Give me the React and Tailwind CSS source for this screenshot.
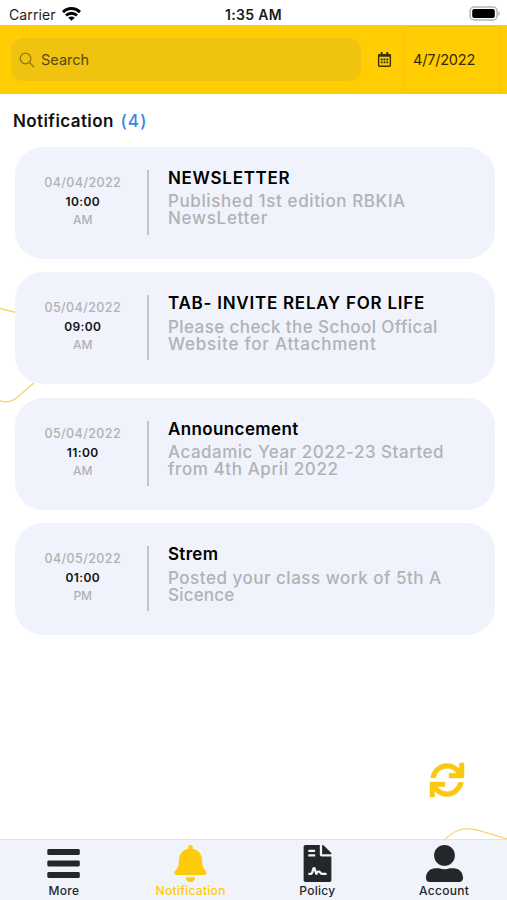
import React from 'react';
import { FaBell, FaFileContract, FaRegCalendarAlt, FaSync, FaUserAlt } from 'react-icons/fa';

const notifications = [
    {
        id: 1,
        date: '04/04/2022',
        time: '10:00',
        period: 'AM',
        title: 'NEWSLETTER',
        titleClass: 'tracking-[0.7px]',
        lines: [
            { text: 'Published 1st edition RBKIA', className: 'tracking-[0.6px]' },
            { text: 'NewsLetter', className: 'tracking-[0.7px]' },
        ],
    },
    {
        id: 2,
        date: '05/04/2022',
        time: '09:00',
        period: 'AM',
        title: 'TAB- INVITE RELAY FOR LIFE',
        titleClass: 'tracking-[0.75px]',
        lines: [
            { text: 'Please check the School Offical', className: 'tracking-[0.41px]' },
            { text: 'Website for Attachment', className: 'tracking-[0.78px]' },
        ],
    },
    {
        id: 3,
        date: '05/04/2022',
        time: '11:00',
        period: 'AM',
        title: 'Announcement',
        titleClass: 'tracking-[0.38px]',
        lines: [
            { text: 'Acadamic Year 2022-23 Started', className: 'tracking-[0.5px]' },
            { text: 'from 4th April 2022', className: 'tracking-[0.6px]' },
        ],
    },
    {
        id: 4,
        date: '04/05/2022',
        time: '01:00',
        period: 'PM',
        title: 'Strem',
        titleClass: 'tracking-[0.3px]',
        lines: [
            { text: 'Posted your class work of 5th A', className: 'tracking-[0.51px]' },
            { text: 'Sicence', className: 'tracking-[0.2px]' },
        ],
    },
];

const MenuIcon = () => (
    <svg className="w-[37px] h-[37px]" viewBox="0 0 37 37" fill="currentColor">
        <rect x="2.3" y="4" width="32.5" height="6" rx="1.4" />
        <rect x="2.3" y="15.5" width="32.5" height="6" rx="1.4" />
        <rect x="2.3" y="27" width="32.5" height="6" rx="1.4" />
    </svg>
);

const tabs = [
    { id: 'more', label: 'More', icon: <MenuIcon /> },
    { id: 'notification', label: 'Notification', icon: <FaBell className="w-[37px] h-[37px]" /> },
    { id: 'policy', label: 'Policy', icon: <FaFileContract className="w-[37px] h-[37px]" /> },
    { id: 'account', label: 'Account', icon: <FaUserAlt className="w-[37px] h-[37px]" /> },
];

const StatusBar = () => (
    <div className="h-[25px] px-[9px] grid grid-cols-3 items-center text-[14px] leading-[25px] text-[#1c1c1c]">
        <div className="flex items-center gap-[6px]">
            <span className="pt-[2px] tracking-[0.1px]">Carrier</span>
            <svg className="w-[19px] h-[14px]" viewBox="0 0 19 14" fill="none" stroke="#000" strokeWidth="2.9">
                <path d="M1 5.1C5.8.3 13.2.3 18 5.1" />
                <path d="M4 8.5c3.2-3 7.8-3 11 0" />
                <path d="M9.5 13.8 6.2 10.7c1.8-1.6 4.8-1.6 6.6 0z" fill="#000" stroke="none" />
            </svg>
        </div>
        <span className="pt-[2px] text-center font-semibold tracking-[0.3px]">1:35 AM</span>
        <div className="flex justify-end -mr-[3px]">
            <svg className="w-[32px] h-[15px]" viewBox="0 0 32 15">
                <rect x="1.1" y="1" width="27" height="13" rx="4" fill="#fff" stroke="#b5b5b5" strokeWidth="1.5" />
                <rect x="3.2" y="3" width="22.6" height="9" rx="2" fill="#000" />
                <path d="M29.5 5.2c1.8.8 1.8 3.8 0 4.6z" fill="#a5a5a5" />
            </svg>
        </div>
    </div>
);

const Header = () => (
    <div className="h-[69px] bg-[#ffcd02] flex items-center pl-[11px] pr-[6px]">
        <div className="w-[350px] h-[43px] rounded-[12px] bg-[#efc310] flex items-center pl-[8px] gap-[6px]">
            <svg className="w-[16px] h-[16px]" viewBox="0 0 16 16" fill="none" stroke="#94790c" strokeWidth="1.3">
                <circle cx="6.5" cy="6.5" r="5.3" />
                <path d="m10.5 10.5 4.2 4.2" strokeLinecap="round" />
            </svg>
            <span className="text-[14.5px] text-[#574810]">Search</span>
        </div>
        <FaRegCalendarAlt className="w-[15px] h-[15px] ml-[15.5px] text-[#3b3106]" />
        <div className="ml-auto w-[97px] h-[67px] rounded-[3px] border border-[#f3c408] flex items-center pl-[8px]">
            <span className="text-[14.5px] text-[#332b06] tracking-[-0.2px]">4/7/2022</span>
        </div>
    </div>
);

const NotificationCard = ({ item }) => (
    <div className="h-[112px] rounded-[28px] bg-[#f0f3fb] flex pt-[23px]">
        <div className="w-[132.5px] pl-[4px] flex flex-col items-center text-[#b0b1b5]">
            <span className="mt-[5px] text-[12.5px] leading-[16px] font-medium tracking-[0.4px]">{item.date}</span>
            <span className="mt-[3px] text-[12px] leading-[16px] font-semibold tracking-[0.4px] text-[#111]">{item.time}</span>
            <span className="mt-[2px] text-[12px] leading-[16px] font-medium">{item.period}</span>
        </div>
        <div className="w-[2px] h-[65px] bg-[#c3c5ca]" />
        <div className="pl-[19px] whitespace-nowrap">
            <h3 className={`-mt-[1px] text-[17px] leading-[18px] font-semibold text-black ${item.titleClass}`}>
                {item.title}
            </h3>
            <div className="mt-[6.5px] text-[17px] leading-[17px] font-medium text-[#b0b2b6]">
                {item.lines.map((line) => (
                    <p key={line.text} className={line.className}>{line.text}</p>
                ))}
            </div>
        </div>
    </div>
);

const TabBar = ({ current }) => (
    <nav className="h-[61px] border-t border-[#dfe1e6] bg-[#f0f3fa] grid grid-cols-4">
        {tabs.map((tab) => (
            <div
                key={tab.id}
                className={`flex flex-col items-center pl-[1px] pt-[5px] ${current === tab.id ? 'text-[#fdca0c]' : 'text-[#24272a]'}`}
            >
                {tab.icon}
                <span className="mt-[1px] text-[12px] leading-[16px] font-medium tracking-[0.3px]">{tab.label}</span>
            </div>
        ))}
    </nav>
);

const App = () => {
    return (
        <div className="relative w-[507px] h-[900px] overflow-hidden bg-white flex flex-col font-['Inter',sans-serif]">
            {/* Background curves */}
            <svg className="absolute inset-0 w-[507px] h-[900px]" viewBox="0 0 507 900" fill="none" stroke="#fbd36b" strokeWidth="1.3">
                <path d="M0 308.5 16 312.5" />
                <path d="M0 400.5c7 2.5 12 1.5 17-3L34 383" />
                <path d="M443 841c11-11 20-14 34-11l30 9" />
            </svg>

            <div className="relative flex-1 flex flex-col">
                <StatusBar />
                <Header />
                <h2 className="pl-[13px] mt-[17px] mb-[15.5px] text-[17px] leading-[20px] font-semibold text-[#111] tracking-[0.4px]">
                    Notification <span className="ml-[2px] text-[#3a86e0] font-medium tracking-[1.2px]">(4)</span>
                </h2>
                <div className="flex flex-col gap-[13.6px] pl-[14.5px] pr-[12.5px]">
                    {notifications.map((item) => (
                        <NotificationCard key={item.id} item={item} />
                    ))}
                </div>
                <div className="mt-auto mb-[42px] mr-[43px] flex justify-end">
                    <FaSync className="w-[34px] h-[34px] overflow-visible text-[#fac90f] stroke-current stroke-[8]" />
                </div>
            </div>
            <div className="relative">
                <TabBar current="notification" />
            </div>
        </div>
    );
};

export default App;
